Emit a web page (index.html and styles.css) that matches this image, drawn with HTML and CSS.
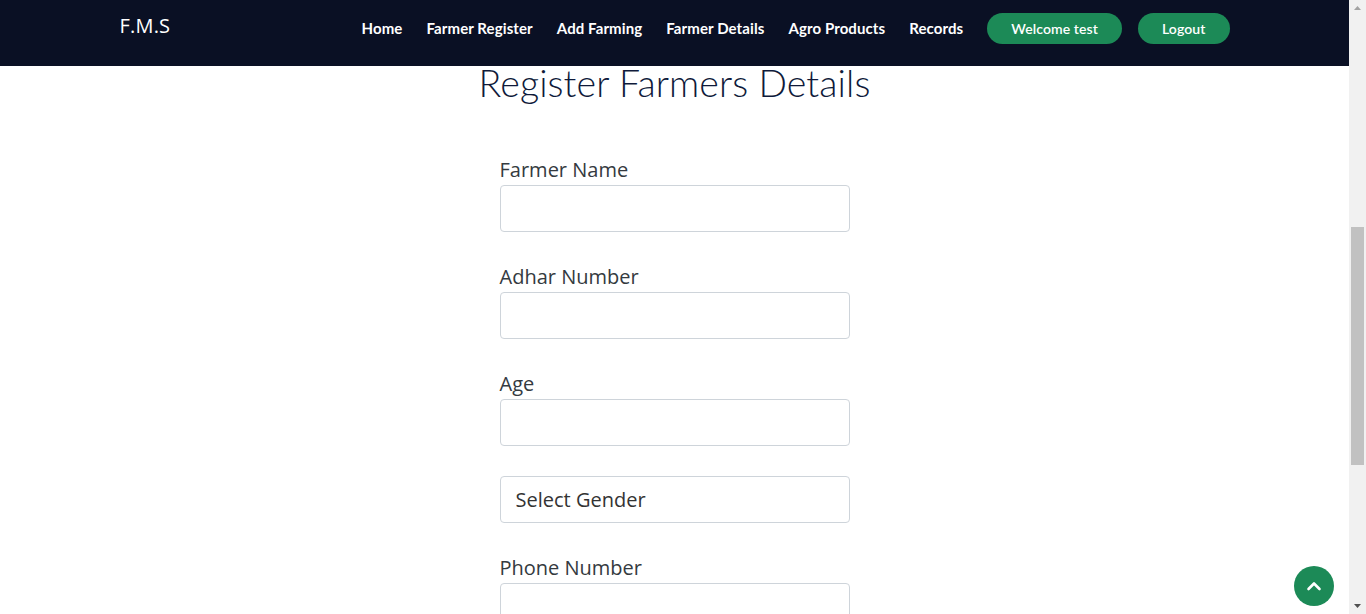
FILE: index.html
```html
<!DOCTYPE html>
<html lang="en">
<head>
<meta charset="utf-8">
<title>F.M.S - Register Farmers Details</title>
<link rel="stylesheet" href="styles.css">
</head>
<body>
<div class="page">
  <header class="site-header">
    <div class="container header-inner">
      <a class="logo" href="#">F.M.S</a>
      <nav class="main-nav">
        <a class="nav-link" href="#">Home</a>
        <a class="nav-link" href="#">Farmer Register</a>
        <a class="nav-link" href="#">Add Farming</a>
        <a class="nav-link" href="#">Farmer Details</a>
        <a class="nav-link" href="#">Agro Products</a>
        <a class="nav-link" href="#">Records</a>
        <a class="nav-btn welcome" href="#">Welcome test</a>
        <a class="nav-btn" href="#">Logout</a>
      </nav>
    </div>
  </header>

  <main class="register">
    <h2 class="page-title">Register Farmers Details</h2>
    <form class="farmer-form">
      <div class="form-group">
        <label class="form-label" for="fname">Farmer Name</label>
        <input class="form-control" id="fname" type="text">
      </div>
      <div class="form-group">
        <label class="form-label" for="adhar">Adhar Number</label>
        <input class="form-control" id="adhar" type="text">
      </div>
      <div class="form-group">
        <label class="form-label" for="age">Age</label>
        <input class="form-control" id="age" type="text">
      </div>
      <div class="form-group">
        <select class="form-control form-select">
          <option>Select Gender</option>
          <option>Male</option>
          <option>Female</option>
        </select>
      </div>
      <div class="form-group">
        <label class="form-label" for="phone">Phone Number</label>
        <input class="form-control" id="phone" type="text">
      </div>
    </form>
  </main>

  <a class="back-to-top" href="#">
    <svg width="18" height="18" viewBox="0 0 18 18" aria-hidden="true"><path d="M3.5 12 L9 6.5 L14.5 12" fill="none" stroke="#fff" stroke-width="2.6" stroke-linecap="round" stroke-linejoin="round"/></svg>
  </a>
</div>

<div class="scrollbar" aria-hidden="true">
  <svg class="sb-arrow" width="17" height="17" viewBox="0 0 17 17"><path d="M5 10 L8.5 6 L12 10 Z" fill="#a3a3a3"/></svg>
  <div class="sb-track"><div class="sb-thumb"></div></div>
  <svg class="sb-arrow" width="17" height="17" viewBox="0 0 17 17"><path d="M5 7 L8.5 11 L12 7 Z" fill="#505050"/></svg>
</div>
</body>
</html>
```

FILE: styles.css
```css
* { box-sizing: border-box; }

html, body {
  margin: 0;
  padding: 0;
  background: #fff;
  overflow: hidden;
}

body {
  font-family: "Open Sans", "Liberation Sans", sans-serif;
  color: #333;
}

.page {
  width: calc(100% - 17px);
  position: relative;
  height: 614px;
  overflow: hidden;
}

.container {
  max-width: 1140px;
  margin: 0 auto;
  padding: 0 15px;
}

.site-header {
  position: absolute;
  top: 0;
  left: 0;
  right: 0;
  height: 66px;
  background: #0a1024;
  z-index: 10;
}

.header-inner {
  height: 100%;
  padding-bottom: 10px;
  display: flex;
  align-items: center;
  justify-content: space-between;
}

.logo {
  color: #fff;
  text-decoration: none;
  font-family: "Open Sans", sans-serif;
  font-size: 20px;
  font-weight: 500;
  letter-spacing: 0.2px;
  margin-top: -6px;
}

.main-nav {
  display: flex;
  align-items: center;
  gap: 24px;
}

.nav-link {
  color: #fff;
  text-decoration: none;
  font-family: "Lato", "Open Sans", sans-serif;
  font-weight: 700;
  font-size: 15px;
  letter-spacing: 0.1px;
}

.nav-btn {
  display: inline-flex;
  align-items: center;
  justify-content: center;
  height: 31px;
  padding: 0 24px;
  border-radius: 16px;
  background: #1c8a57;
  color: #fff;
  text-decoration: none;
  font-family: "Lato", "Open Sans", sans-serif;
  font-weight: 600;
  font-size: 14px;
  letter-spacing: 0.1px;
}

.nav-btn.welcome {
  margin-right: -8px;
}

.register {
  padding-top: 61px;
}

.page-title {
  margin: 0;
  text-align: center;
  font-family: "Lato", "Open Sans", sans-serif;
  font-weight: 300;
  font-size: 37.5px;
  letter-spacing: 0.1px;
  line-height: 1.15;
  color: #0f1a3a;
}

.farmer-form {
  width: 350px;
  margin: 51px auto 0;
}

.form-group {
  margin-bottom: 30px;
}

.form-label {
  display: block;
  font-size: 20px;
  line-height: 30px;
  color: #343a40;
}

.form-control {
  display: block;
  width: 100%;
  height: 47px;
  padding: 0 15px;
  border: 1px solid #ced4da;
  border-radius: 4px;
  background: #fff;
  font-family: "Open Sans", sans-serif;
  font-size: 20px;
  color: #333;
}

.form-select {
  appearance: none;
  -webkit-appearance: none;
}

.back-to-top {
  position: absolute;
  right: 15px;
  bottom: 8px;
  width: 40px;
  height: 40px;
  border-radius: 50%;
  background: #1c8a57;
  display: flex;
  align-items: center;
  justify-content: center;
  z-index: 11;
}

.scrollbar {
  position: fixed;
  top: 0;
  right: 0;
  width: 17px;
  height: 614px;
  background: #f1f1f1;
  display: flex;
  flex-direction: column;
}

.sb-arrow {
  display: block;
  flex: none;
}

.sb-track {
  flex: 1;
  padding-top: 210px;
}

.sb-thumb {
  margin: 0 2px;
  height: 238px;
  background: #c1c1c1;
}
```
